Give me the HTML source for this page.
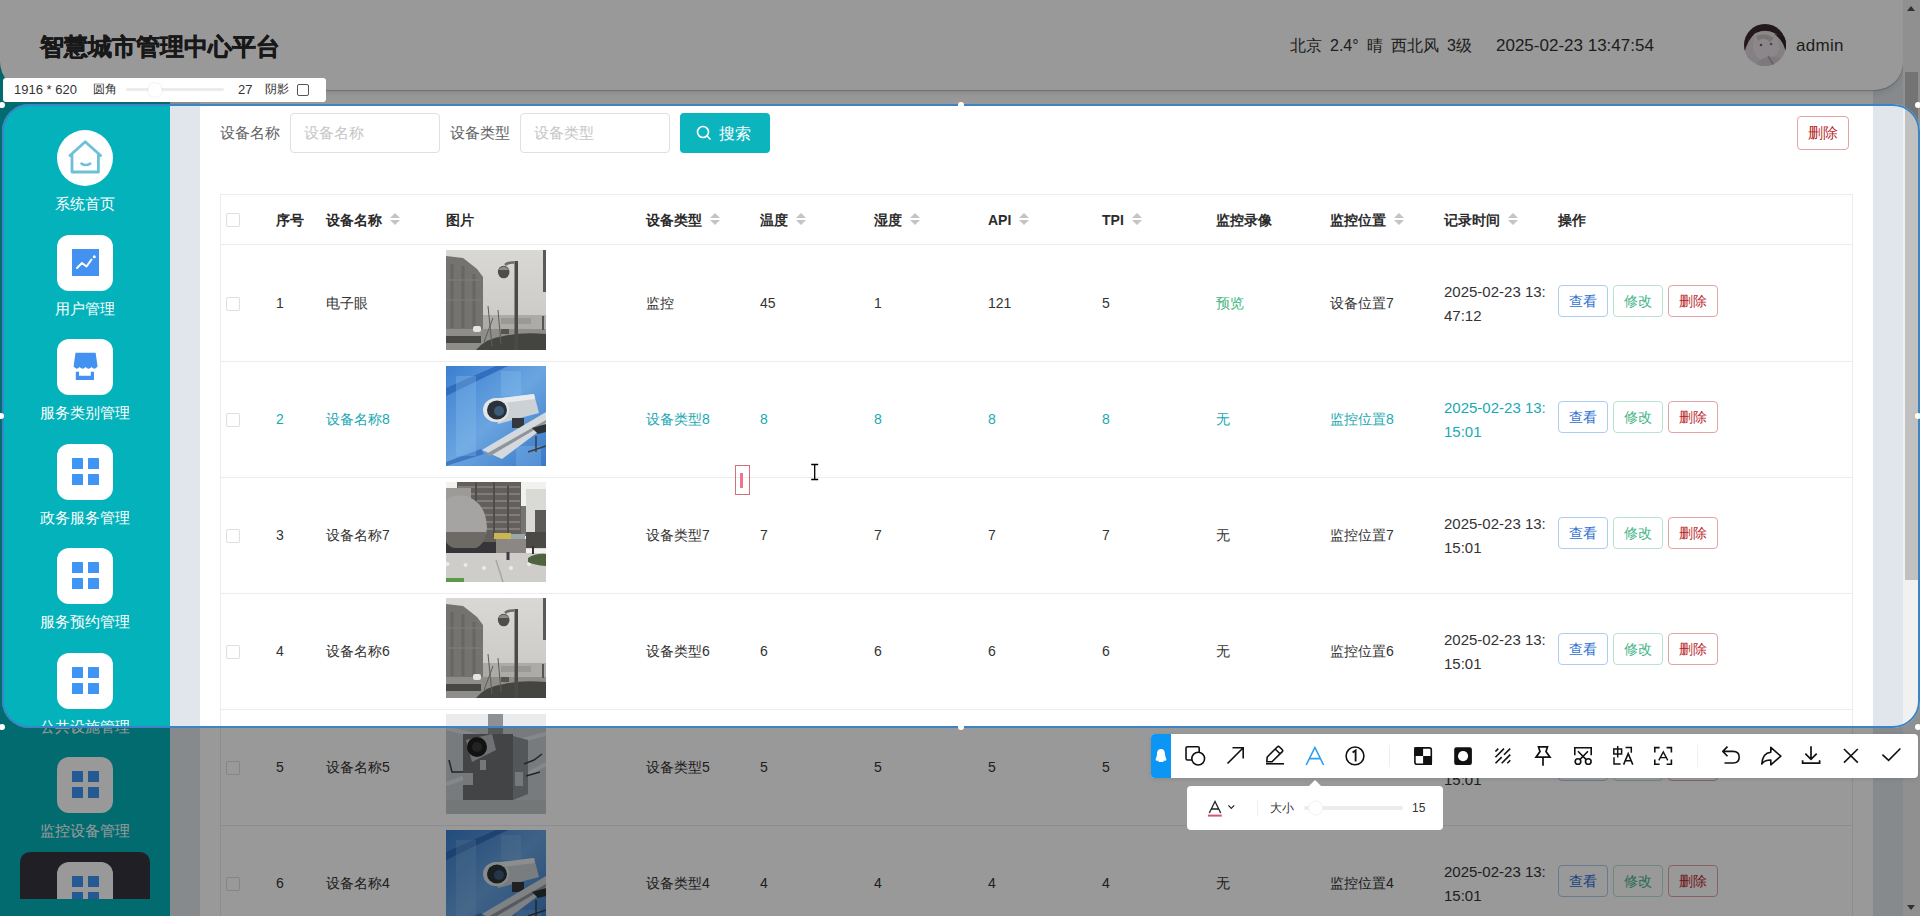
<!DOCTYPE html><html><head><meta charset="utf-8"><style>
*{box-sizing:border-box;margin:0;padding:0}
html,body{width:1920px;height:916px;overflow:hidden;background:#e1e6ec;font-family:"Liberation Sans",sans-serif;color:#333}
.abs{position:absolute}
#side{position:absolute;left:0;top:0;width:170px;height:916px;background:#03b2ba}
.mi{position:absolute;left:0;width:170px;text-align:center;color:#fff;font-size:15px;line-height:20px}
.ib{position:absolute;left:57px;width:56px;height:56px;background:#fff;border-radius:12px}
.g4{position:absolute;left:15px;top:14px;width:27px;height:27px}
.g4 i{position:absolute;width:11px;height:11px;background:#3e95f5;border-radius:.5px}
#card{position:absolute;left:200px;top:0;width:1673px;height:916px;background:#fff}
#hdr{position:absolute;left:0;top:0;width:1903px;height:90px;background:#fff;border-radius:0 0 28px 28px;box-shadow:0 1px 1px rgba(0,0,0,.22),0 3px 8px rgba(0,0,0,.1)}
#sb{position:absolute;left:1903px;top:0;width:17px;height:916px;background:#f1f1f1}
.t{position:absolute;white-space:nowrap;font-size:14px;line-height:20px;color:#333}
.th{font-weight:bold;color:#2b2b2b}
.cb{position:absolute;left:226px;width:14px;height:14px;border:1px solid #dedede;border-radius:2px;background:#fff}
.srt{position:absolute;width:10px;height:12px}
.srt:before{content:"";position:absolute;left:0;top:0;border-left:5px solid transparent;border-right:5px solid transparent;border-bottom:5px solid #c4c4c4}
.srt:after{content:"";position:absolute;left:0;top:7px;border-left:5px solid transparent;border-right:5px solid transparent;border-top:5px solid #c4c4c4}
.rl{position:absolute;left:220px;width:1633px;height:1px;background:#ececec}
.btn{position:absolute;width:50px;height:32px;border:1px solid;border-radius:4px;font-size:14px;line-height:30px;text-align:center;background:#fff}
.bv{color:#2c6fd1;border-color:#aecbf0}
.be{color:#3fb489;border-color:#b7e3d0}
.bd{color:#b9292b;border-color:#e2a4a6}
.img{position:absolute;left:446px;width:100px;height:100px;overflow:hidden}
#ov{position:absolute;left:2px;top:104px;width:1918px;height:624px;border-radius:27px;box-shadow:0 0 0 4000px rgba(0,0,0,.4);pointer-events:none}
#sel{position:absolute;left:2px;top:104px;width:1918px;height:624px;border:2px solid #3d84c6;border-radius:27px}
.dot{position:absolute;width:6px;height:6px;border-radius:50%;background:#fff;margin:-3px 0 0 -3px}
</style></head><body>
<div id="card"></div>
<div id="side">
<div class="ib" style="top:130px;border-radius:50%"><svg width="56" height="56" viewBox="57 130 56 56" style="position:absolute;left:0;top:0"><path d="M70 155.5 L85.2 141.8 L100.6 155.5 M72 154 V172 H98.4 V154" fill="none" stroke="#6cc1d8" stroke-width="2.8" stroke-linejoin="round" stroke-linecap="round"/><path d="M81.5 163.6 Q85.8 166.4 90.2 163.6" fill="none" stroke="#6cc1d8" stroke-width="2.6" stroke-linecap="round"/></svg></div>
<div class="mi" style="top:194px">系统首页</div>
<div class="ib" style="top:235px"><div class="abs" style="left:15px;top:14px;width:27px;height:27px;background:#4392f1"><svg width="27" height="27" viewBox="0 0 27 27" style="position:absolute;left:0;top:0"><path d="M5 19 L10 14 L14.5 17.5 L19.5 10.5" fill="none" stroke="#fff" stroke-width="2" stroke-linecap="round" stroke-linejoin="round"/><circle cx="22.3" cy="7.8" r="1.5" fill="#fff"/></svg></div></div>
<div class="mi" style="top:299px">用户管理</div>
<div class="ib" style="top:339px"><svg width="56" height="56" viewBox="57 339 56 56" style="position:absolute;left:0;top:0"><path d="M75.5 352.8 H95.6 L97.6 366.5 Q94.6 370.5 91.6 367 Q88.6 370.5 85.6 367 Q82.6 370.5 79.6 367 Q76.6 370.5 73.6 366.5 Z" fill="#4392f1"/><path d="M75.8 371.8 V380 H94 V371.8 H90.8 V375.8 H79 V371.8 Z" fill="#4392f1"/></svg></div>
<div class="mi" style="top:403px">服务类别管理</div>
<div class="ib" style="top:444px"><div class="g4"><i style="left:0;top:0"></i><i style="left:15.5px;top:0"></i><i style="left:0;top:16px"></i><i style="left:15.5px;top:16px"></i></div></div>
<div class="mi" style="top:508px">政务服务管理</div>
<div class="ib" style="top:548px"><div class="g4"><i style="left:0;top:0"></i><i style="left:15.5px;top:0"></i><i style="left:0;top:16px"></i><i style="left:15.5px;top:16px"></i></div></div>
<div class="mi" style="top:612px">服务预约管理</div>
<div class="ib" style="top:653px"><div class="g4"><i style="left:0;top:0"></i><i style="left:15.5px;top:0"></i><i style="left:0;top:16px"></i><i style="left:15.5px;top:16px"></i></div></div>
<div class="mi" style="top:717px">公共设施管理</div>
<div class="ib" style="top:757px"><div class="g4"><i style="left:0;top:0"></i><i style="left:15.5px;top:0"></i><i style="left:0;top:16px"></i><i style="left:15.5px;top:16px"></i></div></div>
<div class="mi" style="top:821px">监控设备管理</div>
<div class="abs" style="left:20px;top:852px;width:130px;height:47px;background:#34343f;border-radius:10px 10px 0 0;overflow:hidden"><div class="ib" style="left:37px;top:10px"><div class="g4"><i style="left:0;top:0"></i><i style="left:15.5px;top:0"></i><i style="left:0;top:16px"></i><i style="left:15.5px;top:16px"></i></div></div></div>
</div>
<div class="t" style="left:220px;top:123px;font-size:15px;color:#606266">设备名称</div>
<div class="abs" style="left:290px;top:113px;width:150px;height:40px;border:1px solid #e0e0e0;border-radius:4px"></div>
<div class="t" style="left:304px;top:123px;font-size:15px;color:#c6c6c6">设备名称</div>
<div class="t" style="left:450px;top:123px;font-size:15px;color:#606266">设备类型</div>
<div class="abs" style="left:520px;top:113px;width:150px;height:40px;border:1px solid #e0e0e0;border-radius:4px"></div>
<div class="t" style="left:534px;top:123px;font-size:15px;color:#c6c6c6">设备类型</div>
<div class="abs" style="left:680px;top:113px;width:90px;height:40px;background:#0cb4be;border-radius:4px"></div>
<svg class="abs" style="left:696px;top:125px" width="16" height="16" viewBox="0 0 16 16"><circle cx="7" cy="7" r="5.5" fill="none" stroke="#fff" stroke-width="1.6"/><path d="M11 11 L14.5 14.5" stroke="#fff" stroke-width="1.6"/></svg>
<div class="t" style="left:719px;top:124px;font-size:16px;color:#fff">搜索</div>
<div class="btn bd" style="left:1797px;top:116px;width:52px;height:34px;line-height:32px;font-size:15px">删除</div>
<div class="abs" style="left:220px;top:194px;width:1633px;height:722px;border:1px solid #ececec;border-bottom:none"></div>
<div class="cb" style="top:213px"></div>
<div class="t th" style="left:276px;top:210px">序号</div>
<div class="t th" style="left:326px;top:210px">设备名称</div>
<div class="srt" style="left:390px;top:213px"></div>
<div class="t th" style="left:446px;top:210px">图片</div>
<div class="t th" style="left:646px;top:210px">设备类型</div>
<div class="srt" style="left:710px;top:213px"></div>
<div class="t th" style="left:760px;top:210px">温度</div>
<div class="srt" style="left:796px;top:213px"></div>
<div class="t th" style="left:874px;top:210px">湿度</div>
<div class="srt" style="left:910px;top:213px"></div>
<div class="t th" style="left:988px;top:210px">API</div>
<div class="srt" style="left:1019px;top:213px"></div>
<div class="t th" style="left:1102px;top:210px">TPI</div>
<div class="srt" style="left:1132px;top:213px"></div>
<div class="t th" style="left:1216px;top:210px">监控录像</div>
<div class="t th" style="left:1330px;top:210px">监控位置</div>
<div class="srt" style="left:1394px;top:213px"></div>
<div class="t th" style="left:1444px;top:210px">记录时间</div>
<div class="srt" style="left:1508px;top:213px"></div>
<div class="t th" style="left:1558px;top:210px">操作</div>
<div class="rl" style="top:244px"></div>
<div class="cb" style="top:297px"></div>
<div class="t" style="left:276px;top:293px;color:#333">1</div>
<div class="t" style="left:326px;top:293px;color:#333">电子眼</div>
<div class="t" style="left:646px;top:293px;color:#333">监控</div>
<div class="t" style="left:760px;top:293px;color:#333">45</div>
<div class="t" style="left:874px;top:293px;color:#333">1</div>
<div class="t" style="left:988px;top:293px;color:#333">121</div>
<div class="t" style="left:1102px;top:293px;color:#333">5</div>
<div class="t" style="left:1216px;top:293px;color:#3db57e">预览</div>
<div class="t" style="left:1330px;top:293px;color:#333">设备位置7</div>
<div class="img" style="top:250px"><svg width="100" height="100" viewBox="0 0 100 100"><defs><linearGradient id="sk1" x1="0" y1="0" x2="0" y2="1"><stop offset="0" stop-color="#dad8d5"/><stop offset="1" stop-color="#c6c5c1"/></linearGradient></defs><rect width="100" height="100" fill="url(#sk1)"/>
<rect x="36" y="65" width="64" height="15" fill="#acaba7"/><rect x="55" y="68" width="30" height="6" fill="#9a9995"/>
<path d="M0 6 L17 8 L26 15 L31 19 L37 27 V80 H0Z" fill="#75736f"/><path d="M6 14 V78 M17 16 V78 M28 24 V78" stroke="#686662" stroke-width="3"/><path d="M0 30 H36 M0 50 H36" stroke="#807e7a" stroke-width="1"/>
<rect x="0" y="79" width="100" height="21" fill="#8e8d89"/><rect x="0" y="86" width="35" height="7" fill="#474844"/>
<path d="M30 100 Q40 88 58 86 Q75 82 100 84 V100Z" fill="#444540"/><path d="M42 56 L46 96 M47 68 L38 92 M52 60 L55 94" stroke="#5d5d57" stroke-width="1"/>
<rect x="27" y="76" width="8" height="6" rx="2" fill="#e4e4e1"/><rect x="55" y="79" width="8" height="5" fill="#55554f"/>
<rect x="68.5" y="11" width="3.5" height="89" fill="#4a4a47"/><path d="M59 15 Q62 12 68.5 12.5" stroke="#6a6a67" stroke-width="2.5" fill="none"/><ellipse cx="57.7" cy="22" rx="5.8" ry="6.3" fill="#4d4d4a"/><path d="M52 20 Q57.7 13 63.4 20Z" fill="#8d8c89"/>
<rect x="97" y="0" width="3" height="42" fill="#595955"/><rect x="96" y="66" width="2" height="14" fill="#555"/></svg></div>
<div class="t" style="left:1444px;top:280px;font-size:15px;line-height:24px;color:#333">2025-02-23 13:<br>47:12</div>
<div class="btn bv" style="left:1558px;top:285px">查看</div>
<div class="btn be" style="left:1613px;top:285px">修改</div>
<div class="btn bd" style="left:1668px;top:285px">删除</div>
<div class="rl" style="top:361px"></div>
<div class="cb" style="top:413px"></div>
<div class="t" style="left:276px;top:409px;color:#19a9b3">2</div>
<div class="t" style="left:326px;top:409px;color:#19a9b3">设备名称8</div>
<div class="t" style="left:646px;top:409px;color:#19a9b3">设备类型8</div>
<div class="t" style="left:760px;top:409px;color:#19a9b3">8</div>
<div class="t" style="left:874px;top:409px;color:#19a9b3">8</div>
<div class="t" style="left:988px;top:409px;color:#19a9b3">8</div>
<div class="t" style="left:1102px;top:409px;color:#19a9b3">8</div>
<div class="t" style="left:1216px;top:409px;color:#19a9b3">无</div>
<div class="t" style="left:1330px;top:409px;color:#19a9b3">监控位置8</div>
<div class="img" style="top:366px"><svg width="100" height="100" viewBox="0 0 100 100"><defs><linearGradient id="bg2" x1="0" y1="0" x2="1" y2="1"><stop offset="0" stop-color="#3b7fd0"/><stop offset=".5" stop-color="#6aa5e0"/><stop offset="1" stop-color="#3a78c8"/></linearGradient><filter id="bl2" x="0" y="0" width="1" height="1"><feGaussianBlur stdDeviation="0.7"/></filter></defs><rect width="100" height="100" fill="url(#bg2)"/><g filter="url(#bl2)">
<path d="M0 22 L50 0 H62 L0 30Z" fill="#2d66b8" opacity=".8"/><path d="M0 96 L35 83 L38 88 L0 100Z" fill="#2d66b8" opacity=".7"/>
<path d="M10 10 H30 V90 H10Z M55 5 H75 V30 H55Z" fill="#8cc0ee" opacity=".3"/><path d="M70 80 H95 V100 H70Z" fill="#8cc0ee" opacity=".3"/>
<path d="M44 34 L88 28 L93 47 L52 58Z" fill="#ccd1d6"/><path d="M46 33 L88 28 L89 33 L48 38Z" fill="#e8ebee"/>
<ellipse cx="50" cy="44" rx="13" ry="12" fill="#e3e6e9"/><ellipse cx="51" cy="44" rx="10" ry="9.5" fill="#2b3238"/><ellipse cx="53" cy="45" rx="5" ry="5" fill="#3c5a78"/>
<rect x="66" y="52" width="12" height="10" fill="#33383d"/>
<path d="M36 84 L100 46 V60 L56 93Z" fill="#d4d9de"/><path d="M40 88 L100 54 V57 L44 90Z" fill="#8f959b"/>
<path d="M86 62 L100 58 V66 L92 68Z" fill="#2c3034"/><path d="M82 86 L100 80 M90 70 V86" stroke="#3a3e42" stroke-width="1.5"/>
</g></svg></div>
<div class="t" style="left:1444px;top:396px;font-size:15px;line-height:24px;color:#19a9b3">2025-02-23 13:<br>15:01</div>
<div class="btn bv" style="left:1558px;top:401px">查看</div>
<div class="btn be" style="left:1613px;top:401px">修改</div>
<div class="btn bd" style="left:1668px;top:401px">删除</div>
<div class="rl" style="top:477px"></div>
<div class="cb" style="top:529px"></div>
<div class="t" style="left:276px;top:525px;color:#333">3</div>
<div class="t" style="left:326px;top:525px;color:#333">设备名称7</div>
<div class="t" style="left:646px;top:525px;color:#333">设备类型7</div>
<div class="t" style="left:760px;top:525px;color:#333">7</div>
<div class="t" style="left:874px;top:525px;color:#333">7</div>
<div class="t" style="left:988px;top:525px;color:#333">7</div>
<div class="t" style="left:1102px;top:525px;color:#333">7</div>
<div class="t" style="left:1216px;top:525px;color:#333">无</div>
<div class="t" style="left:1330px;top:525px;color:#333">监控位置7</div>
<div class="img" style="top:482px"><svg width="100" height="100" viewBox="0 0 100 100"><rect width="100" height="100" fill="#f1f1ef"/>
<rect x="11" y="0" width="64" height="62" fill="#625f5c"/><path d="M12 5 H74 M12 12 H74 M12 19 H74 M12 26 H74 M12 33 H74 M12 40 H74 M12 47 H74" stroke="#8a8783" stroke-width="1.6"/><path d="M30 0 V55 M48 0 V55 M62 4 V55" stroke="#4f4d4a" stroke-width="2"/>
<rect x="75" y="24" width="5" height="30" fill="#777572"/>
<rect x="80" y="7" width="20" height="60" fill="#d9d9d6"/><rect x="89" y="28" width="11" height="38" fill="#5d5b58"/><rect x="80" y="50" width="20" height="16" fill="#4a4946"/>
<rect x="0" y="60" width="50" height="11" fill="#36353a"/><rect x="48" y="51" width="17" height="6" fill="#c9b64e"/><rect x="65" y="52" width="14" height="5" fill="#9aa6a8"/>
<rect x="50" y="57" width="30" height="14" fill="#8a8784"/><rect x="0" y="71" width="100" height="29" fill="#cfcdca"/><path d="M50 78 L57 100" stroke="#a9a7a3" stroke-width="1.5"/>
<rect x="0" y="6" width="25" height="12" fill="#9c9b98"/>
<path d="M0 18 Q6 12 20 14 Q40 20 41 46 L40 52 H0Z" fill="#a5a4a2"/><path d="M0 50 H40 Q39 62 30 66 H8 Q2 64 0 60Z" fill="#6d6a66"/>
<circle cx="1.5" cy="82" r="2" fill="#ecebe8"/><circle cx="19.5" cy="83" r="2" fill="#ecebe8"/><circle cx="38" cy="86" r="2" fill="#ecebe8"/><circle cx="65" cy="86" r="2" fill="#ecebe8"/><circle cx="83" cy="82" r="2" fill="#ecebe8"/>
<rect x="60.5" y="70" width="3" height="8" fill="#3e3a44"/><rect x="86" y="64" width="2" height="8" fill="#333"/>
<path d="M82 76 Q90 71 100 72 V84 Q88 83 82 80Z" fill="#4f6343"/><rect x="0" y="96" width="18" height="4" fill="#5a9a48"/>
</svg></div>
<div class="t" style="left:1444px;top:512px;font-size:15px;line-height:24px;color:#333">2025-02-23 13:<br>15:01</div>
<div class="btn bv" style="left:1558px;top:517px">查看</div>
<div class="btn be" style="left:1613px;top:517px">修改</div>
<div class="btn bd" style="left:1668px;top:517px">删除</div>
<div class="rl" style="top:593px"></div>
<div class="cb" style="top:645px"></div>
<div class="t" style="left:276px;top:641px;color:#333">4</div>
<div class="t" style="left:326px;top:641px;color:#333">设备名称6</div>
<div class="t" style="left:646px;top:641px;color:#333">设备类型6</div>
<div class="t" style="left:760px;top:641px;color:#333">6</div>
<div class="t" style="left:874px;top:641px;color:#333">6</div>
<div class="t" style="left:988px;top:641px;color:#333">6</div>
<div class="t" style="left:1102px;top:641px;color:#333">6</div>
<div class="t" style="left:1216px;top:641px;color:#333">无</div>
<div class="t" style="left:1330px;top:641px;color:#333">监控位置6</div>
<div class="img" style="top:598px"><svg width="100" height="100" viewBox="0 0 100 100"><defs><linearGradient id="sk1" x1="0" y1="0" x2="0" y2="1"><stop offset="0" stop-color="#dad8d5"/><stop offset="1" stop-color="#c6c5c1"/></linearGradient></defs><rect width="100" height="100" fill="url(#sk1)"/>
<rect x="36" y="65" width="64" height="15" fill="#acaba7"/><rect x="55" y="68" width="30" height="6" fill="#9a9995"/>
<path d="M0 6 L17 8 L26 15 L31 19 L37 27 V80 H0Z" fill="#75736f"/><path d="M6 14 V78 M17 16 V78 M28 24 V78" stroke="#686662" stroke-width="3"/><path d="M0 30 H36 M0 50 H36" stroke="#807e7a" stroke-width="1"/>
<rect x="0" y="79" width="100" height="21" fill="#8e8d89"/><rect x="0" y="86" width="35" height="7" fill="#474844"/>
<path d="M30 100 Q40 88 58 86 Q75 82 100 84 V100Z" fill="#444540"/><path d="M42 56 L46 96 M47 68 L38 92 M52 60 L55 94" stroke="#5d5d57" stroke-width="1"/>
<rect x="27" y="76" width="8" height="6" rx="2" fill="#e4e4e1"/><rect x="55" y="79" width="8" height="5" fill="#55554f"/>
<rect x="68.5" y="11" width="3.5" height="89" fill="#4a4a47"/><path d="M59 15 Q62 12 68.5 12.5" stroke="#6a6a67" stroke-width="2.5" fill="none"/><ellipse cx="57.7" cy="22" rx="5.8" ry="6.3" fill="#4d4d4a"/><path d="M52 20 Q57.7 13 63.4 20Z" fill="#8d8c89"/>
<rect x="97" y="0" width="3" height="42" fill="#595955"/><rect x="96" y="66" width="2" height="14" fill="#555"/></svg></div>
<div class="t" style="left:1444px;top:628px;font-size:15px;line-height:24px;color:#333">2025-02-23 13:<br>15:01</div>
<div class="btn bv" style="left:1558px;top:633px">查看</div>
<div class="btn be" style="left:1613px;top:633px">修改</div>
<div class="btn bd" style="left:1668px;top:633px">删除</div>
<div class="rl" style="top:709px"></div>
<div class="cb" style="top:761px"></div>
<div class="t" style="left:276px;top:757px;color:#333">5</div>
<div class="t" style="left:326px;top:757px;color:#333">设备名称5</div>
<div class="t" style="left:646px;top:757px;color:#333">设备类型5</div>
<div class="t" style="left:760px;top:757px;color:#333">5</div>
<div class="t" style="left:874px;top:757px;color:#333">5</div>
<div class="t" style="left:988px;top:757px;color:#333">5</div>
<div class="t" style="left:1102px;top:757px;color:#333">5</div>
<div class="t" style="left:1216px;top:757px;color:#333">无</div>
<div class="t" style="left:1330px;top:757px;color:#333">监控位置5</div>
<div class="img" style="top:714px"><svg width="100" height="100" viewBox="0 0 100 100"><rect width="100" height="100" fill="#c9cdd0"/>
<rect x="0" y="0" width="100" height="12" fill="#e9ebed"/><path d="M0 14 L40 24 M60 30 L100 20 M0 70 L17 64 M82 60 L100 50" stroke="#dfe2e4" stroke-width="4"/>
<rect x="42" y="0" width="15" height="22" fill="#8e9194"/>
<rect x="17" y="20" width="50" height="66" fill="#6f7275"/><path d="M67 22 L82 26 V80 L67 86Z" fill="#8d9195"/>
<path d="M20 26 L46 20 L50 36 L26 48Z" fill="#b9bdc1"/><circle cx="31" cy="33" r="10" fill="#1e1e1f"/><circle cx="31" cy="33" r="5" fill="#3a3a3b"/><rect x="34" y="46" width="6" height="10" fill="#c3c6c9"/>
<rect x="17" y="59" width="10" height="12" fill="#c6c8ca"/><rect x="69" y="58" width="8" height="14" fill="#c6c8ca"/>
<path d="M3 46 L6 58 H17 M96 40 L88 46 L78 50 M80 62 L94 58" stroke="#3b3d3f" stroke-width="1.5" fill="none"/>
<rect x="0" y="86" width="100" height="14" fill="#c2c6c9"/>
</svg></div>
<div class="t" style="left:1444px;top:744px;font-size:15px;line-height:24px;color:#333">2025-02-23 13:<br>15:01</div>
<div class="btn bv" style="left:1558px;top:749px">查看</div>
<div class="btn be" style="left:1613px;top:749px">修改</div>
<div class="btn bd" style="left:1668px;top:749px">删除</div>
<div class="rl" style="top:825px"></div>
<div class="cb" style="top:877px"></div>
<div class="t" style="left:276px;top:873px;color:#333">6</div>
<div class="t" style="left:326px;top:873px;color:#333">设备名称4</div>
<div class="t" style="left:646px;top:873px;color:#333">设备类型4</div>
<div class="t" style="left:760px;top:873px;color:#333">4</div>
<div class="t" style="left:874px;top:873px;color:#333">4</div>
<div class="t" style="left:988px;top:873px;color:#333">4</div>
<div class="t" style="left:1102px;top:873px;color:#333">4</div>
<div class="t" style="left:1216px;top:873px;color:#333">无</div>
<div class="t" style="left:1330px;top:873px;color:#333">监控位置4</div>
<div class="img" style="top:830px"><svg width="100" height="100" viewBox="0 0 100 100"><defs><linearGradient id="bg2" x1="0" y1="0" x2="1" y2="1"><stop offset="0" stop-color="#3b7fd0"/><stop offset=".5" stop-color="#6aa5e0"/><stop offset="1" stop-color="#3a78c8"/></linearGradient><filter id="bl2" x="0" y="0" width="1" height="1"><feGaussianBlur stdDeviation="0.7"/></filter></defs><rect width="100" height="100" fill="url(#bg2)"/><g filter="url(#bl2)">
<path d="M0 22 L50 0 H62 L0 30Z" fill="#2d66b8" opacity=".8"/><path d="M0 96 L35 83 L38 88 L0 100Z" fill="#2d66b8" opacity=".7"/>
<path d="M10 10 H30 V90 H10Z M55 5 H75 V30 H55Z" fill="#8cc0ee" opacity=".3"/><path d="M70 80 H95 V100 H70Z" fill="#8cc0ee" opacity=".3"/>
<path d="M44 34 L88 28 L93 47 L52 58Z" fill="#ccd1d6"/><path d="M46 33 L88 28 L89 33 L48 38Z" fill="#e8ebee"/>
<ellipse cx="50" cy="44" rx="13" ry="12" fill="#e3e6e9"/><ellipse cx="51" cy="44" rx="10" ry="9.5" fill="#2b3238"/><ellipse cx="53" cy="45" rx="5" ry="5" fill="#3c5a78"/>
<rect x="66" y="52" width="12" height="10" fill="#33383d"/>
<path d="M36 84 L100 46 V60 L56 93Z" fill="#d4d9de"/><path d="M40 88 L100 54 V57 L44 90Z" fill="#8f959b"/>
<path d="M86 62 L100 58 V66 L92 68Z" fill="#2c3034"/><path d="M82 86 L100 80 M90 70 V86" stroke="#3a3e42" stroke-width="1.5"/>
</g></svg></div>
<div class="t" style="left:1444px;top:860px;font-size:15px;line-height:24px;color:#333">2025-02-23 13:<br>15:01</div>
<div class="btn bv" style="left:1558px;top:865px">查看</div>
<div class="btn be" style="left:1613px;top:865px">修改</div>
<div class="btn bd" style="left:1668px;top:865px">删除</div>
<div class="rl" style="top:941px"></div>
<div id="hdr">
<div class="t" style="left:40px;top:32px;font-size:24px;line-height:30px;font-weight:bold;color:#282828;-webkit-text-stroke:0.5px #282828">智慧城市管理中心平台</div>
<div class="t" style="left:1290px;top:35px;font-size:16px;line-height:22px;color:#333">北京</div>
<div class="t" style="left:1330px;top:35px;font-size:16px;line-height:22px;color:#333">2.4°</div>
<div class="t" style="left:1367px;top:35px;font-size:16px;line-height:22px;color:#333">晴</div>
<div class="t" style="left:1391px;top:35px;font-size:16px;line-height:22px;color:#333">西北风</div>
<div class="t" style="left:1447px;top:35px;font-size:16px;line-height:22px;color:#333">3级</div>
<div class="t" style="left:1496px;top:35px;font-size:17px;line-height:22px;color:#333">2025-02-23 13:47:54</div>
<svg class="abs" style="left:1744px;top:24px" width="42" height="42" viewBox="0 0 42 42"><defs><clipPath id="avc"><circle cx="21" cy="21" r="21"/></clipPath></defs><g clip-path="url(#avc)"><rect width="42" height="42" fill="#dcd6da"/><path d="M0 0 H42 V26 Q38 14 32 10 Q22 4 12 9 Q4 14 0 30Z" fill="#3d2830"/><path d="M10 10 Q20 5 30 9 Q36 16 35 26 Q30 36 20 38 Q11 34 9 24Z" fill="#e9e1e6"/><path d="M12 12 Q22 8 30 14 L26 18 Q20 12 14 17Z" fill="#c9c2b9"/><path d="M30 10 Q40 16 42 30 V14Z" fill="#2f2228"/><path d="M0 28 Q6 34 10 42 H0Z" fill="#bdb8bc"/><path d="M14 38 Q22 30 36 34 L42 42 H12Z" fill="#cfcbd0"/><path d="M24 32 L30 42" stroke="#b995a8" stroke-width="1.5"/><circle cx="17" cy="21" r="1.3" fill="#666"/><circle cx="27" cy="20" r="1.3" fill="#777"/></g></svg>
<div class="t" style="left:1796px;top:35px;font-size:17px;letter-spacing:0.3px;line-height:22px;color:#333">admin</div>
</div>
<div id="sb"><div class="abs" style="left:2px;top:72px;width:13px;height:508px;background:#c1c1c1"></div>
<div class="abs" style="left:4px;top:6px;border-left:4.5px solid transparent;border-right:4.5px solid transparent;border-bottom:5px solid #505050"></div>
<div class="abs" style="left:4px;top:905px;border-left:4.5px solid transparent;border-right:4.5px solid transparent;border-top:5px solid #505050"></div></div>
<div class="abs" style="left:735px;top:465px;width:15px;height:30px;border:1px solid #d3707e"></div>
<div class="abs" style="left:740px;top:473px;width:2.5px;height:15px;background:#f07585"></div>
<svg class="abs" style="left:808px;top:462px" width="14" height="20" viewBox="0 0 14 20"><path d="M3.2 2.5 H10.2 M6.7 2.5 V17.5 M3.2 17.5 H10.2" stroke="#000" stroke-width="1.3" fill="none"/></svg>
<div id="ov"></div><div id="sel"></div>
<div class="dot" style="left:2px;top:105px"></div>
<div class="dot" style="left:961px;top:105px"></div>
<div class="dot" style="left:1918px;top:105px"></div>
<div class="dot" style="left:1px;top:416px"></div>
<div class="dot" style="left:1918px;top:416px"></div>
<div class="dot" style="left:2px;top:727px"></div>
<div class="dot" style="left:961px;top:727px"></div>
<div class="dot" style="left:1918px;top:727px"></div>
<div class="abs" style="left:3px;top:78px;width:323px;height:24px;background:#fff;border-radius:3px"></div>
<div class="t" style="left:14px;top:81px;font-size:13px;line-height:18px;color:#333">1916 * 620</div>
<div class="t" style="left:93px;top:81px;font-size:12px;line-height:17px;color:#333">圆角</div>
<div class="abs" style="left:126px;top:88px;width:98px;height:3px;background:#ececec;border-radius:2px"></div>
<div class="abs" style="left:148px;top:83px;width:14px;height:14px;background:#fff;border-radius:50%;box-shadow:0 0 2px rgba(0,0,0,.15)"></div>
<div class="t" style="left:238px;top:81px;font-size:13px;line-height:18px;color:#333">27</div>
<div class="t" style="left:265px;top:81px;font-size:12px;line-height:17px;color:#333">阴影</div>
<div class="abs" style="left:297px;top:84px;width:12px;height:12px;border:1px solid #555;border-radius:2px;background:#fff"></div>
<div class="abs" style="left:1151px;top:734px;width:767px;height:44px;background:#fff;border-radius:4px;box-shadow:0 1px 4px rgba(0,0,0,.1)"></div>
<div class="abs" style="left:1151px;top:734px;width:20px;height:44px;background:#0b95f4;border-radius:4px 0 0 4px"></div>
<svg class="abs" style="left:1154px;top:748px" width="14" height="16" viewBox="0 0 14 16"><path d="M7 1 C3.5 1 3 4 3 7 L1.5 12 C2.5 13 4 13 4.5 12.5 L4.5 14 H9.5 V12.5 C10 13 11.5 13 12.5 12 L11 7 C11 4 10.5 1 7 1Z" fill="#fff"/></svg>
<div class="abs" style="left:1187px;top:786px;width:256px;height:44px;background:#fff;border-radius:4px"></div>
<div class="abs" style="left:1309px;top:780px;border-left:6px solid transparent;border-right:6px solid transparent;border-bottom:6px solid #fff"></div>
<svg class="abs" style="left:1151px;top:734px" width="767" height="44" viewBox="1151 734 767 44" fill="none" stroke="#111" stroke-width="1.6" stroke-linecap="butt" stroke-linejoin="miter">
<path d="M1192 760 H1187.5 Q1186 760 1186 758.5 V748 Q1186 746.8 1187.5 746.8 H1198 Q1199.2 746.8 1199.2 748 V752"/>
<circle cx="1198.2" cy="758.6" r="6.4"/>
<path d="M1227.5 763.5 L1243 748 M1232.5 747.8 H1243.2 V758.5"/>
<path d="M1266.8 761.8 L1267.2 757 L1277.5 746.8 Q1278.4 746 1279.3 746.8 L1282.3 749.8 Q1283.1 750.7 1282.3 751.6 L1272 761.8 Z M1275.2 749 L1280.2 754"/>
<path d="M1266 763.8 H1284"/>
<path d="M1306.2 765 L1314.9 747.5 L1323.6 765 M1309.2 758.6 H1320.6" stroke="#2f9ef2"/>
<circle cx="1355" cy="755.9" r="8.9"/>
<path d="M1352.6 752.4 L1355.6 750.4 V761.4" stroke-width="1.8"/>
<path d="M1389.5 745 V767" stroke="#eee" stroke-width="1"/>
<rect x="1414.9" y="747.9" width="16.4" height="16.4" rx="2"/>
<path d="M1414.2 747.2 H1423.1 V756.1 H1414.2Z M1423.1 756.1 H1432 V765 H1423.1Z" fill="#111" stroke="none"/>
<rect x="1454.2" y="747.2" width="17.7" height="17.7" rx="2.2" fill="#111" stroke="none"/>
<circle cx="1463.05" cy="756.05" r="5.1" fill="#fff" stroke="none"/>
<path d="M1495.4 751.5 L1498.3 748.6 M1495.4 757.2 L1504 748.6 M1495.5 763.3 L1501.7 757.1 M1504 754.8 L1510.2 748.6 M1501.7 763.2 L1510.3 754.6 M1507.3 763.2 L1510.3 760.2" stroke-width="1.6"/>
<path d="M1538.5 746.8 H1547.5 L1546 751.5 L1550 757.2 H1536 L1540 751.5Z M1543 757.2 V765.8" stroke-width="1.7"/>
<path d="M1574.8 755.2 V747.8 H1591.2 V755.2 M1578 751.2 L1586.2 759.6 M1588 751.2 L1579.8 759.6" stroke-width="1.6"/>
<circle cx="1578" cy="761.5" r="2.8"/><circle cx="1588.3" cy="761.5" r="2.8"/>
<path d="M1613.8 749 H1621.6 V754 H1613.8Z M1617.7 746 V757.6" stroke-width="1.5"/>
<path d="M1625.5 747.6 H1631.3 V752.8 M1614 757.2 V764 H1620.6" stroke-width="1.5"/>
<path d="M1623.6 764.6 L1628.2 753.6 L1632.8 764.6 M1625.2 760.8 H1631.2" stroke-width="1.6"/>
<path d="M1654.8 752.4 V747.6 H1659.6 M1666.6 747.6 H1671.4 V752.4 M1671.4 759.4 V764.2 H1666.6 M1659.6 764.2 H1654.8 V759.4" stroke-width="1.6"/>
<path d="M1658.8 760.4 L1663.3 752 L1667.8 760.4 M1660.3 757.6 H1666.3" stroke-width="1.4"/>
<path d="M1697.7 744.5 V767.5" stroke="#eee" stroke-width="1"/>
<path d="M1727.5 746.6 L1722.8 751.4 L1727.5 756.2 M1723.2 751.4 H1733 Q1739.2 751.4 1739.2 757.2 Q1739.2 763 1733 763 H1724.5" stroke-width="1.6" stroke-linejoin="round"/>
<path d="M1770.8 747.3 L1780.8 756.2 L1770.8 764.8 V760 Q1764.5 760 1761.8 764 Q1762.5 753 1770.8 752.3 Z" stroke-width="1.6" stroke-linejoin="round"/>
<path d="M1811 746.2 V759.5 M1805.3 753.6 L1811 759.3 L1816.7 753.6 M1802.6 760.2 V763.2 H1819.6 V760.2" stroke-width="1.7"/>
<path d="M1844 749 L1857.8 762.6 M1857.8 749 L1844 762.6" stroke-width="1.6"/>
<path d="M1882.4 754.6 L1888.6 760.4 L1900.4 748.5" stroke-width="1.6"/>
</svg>
<svg class="abs" style="left:1187px;top:786px" width="256" height="44" viewBox="1187 786 256 44" fill="none" stroke="#222" stroke-width="1.3">
<path d="M1209.3 813 L1215 801.4 L1220.7 813 M1211.3 809 H1218.7"/>
<path d="M1208 815.6 H1221.8" stroke="#d5566e" stroke-width="2"/>
<path d="M1228.4 805.4 L1231.3 808.4 L1234.2 805.4" stroke-width="1.2"/>
<path d="M1257.5 800.5 V816" stroke="#eee" stroke-width="1"/>
<rect x="1304" y="806" width="99" height="4" rx="2" fill="#ececec" stroke="none"/>
<circle cx="1315.7" cy="808" r="7" fill="#fff" stroke="#f2f2f2" stroke-width="1"/>
</svg>
<div class="t" style="left:1270px;top:799px;font-size:12px;line-height:18px;color:#333">大小</div>
<div class="t" style="left:1412px;top:799px;font-size:12px;line-height:18px;color:#333">15</div>
</body></html>
